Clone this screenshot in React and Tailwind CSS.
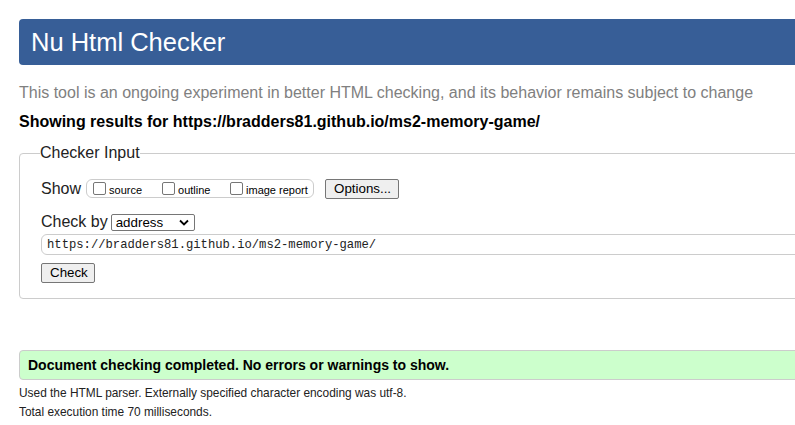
import React from 'react';

function Box({ label, className = '' }) {
  return (
    <label className={`flex items-center ${className}`}>
      <span className="shrink-0 w-[13px] h-[13px] border border-[#767676] rounded-[2px] bg-white" />
      <span className="ml-[3px] text-[11px] leading-[13px] mt-[3px] whitespace-nowrap">{label}</span>
    </label>
  );
}

function Btn({ children, className = '' }) {
  return (
    <button className={`h-[20px] px-[8px] bg-[#efefef] border border-[#767676] rounded-[2px] text-[13.33px] leading-[16px] text-black ${className}`}>
      {children}
    </button>
  );
}

export default function App() {
  return (
    <div className="w-full min-h-[425px] overflow-hidden bg-white text-black" style={{ fontFamily: '"Liberation Sans", Arial, sans-serif' }}>
      <div className="w-[1100px] pl-[19px] pt-[19px]">
        {/* Header */}
        <div className="h-[46px] flex items-center pl-[12px] rounded-l-[4px] bg-[#375e97]">
          <h1 className="text-[25.5px] leading-[28px] text-white">Nu Html Checker</h1>
        </div>

        <p className="mt-[19px] text-[16px] leading-[18px] text-[#808080]">
          This tool is an ongoing experiment in better HTML checking, and its behavior remains subject to change
        </p>
        <p className="mt-[11px] text-[16px] leading-[18px] font-bold text-black">
          Showing results for https://bradders81.github.io/ms2-memory-game/
        </p>

        {/* Checker Input */}
        <fieldset className="mt-[13px] border border-[#cccccc] rounded-l-[4px] pl-[21px] pb-[14px]">
          <legend className="-ml-px text-[16px] leading-[18px] text-[#222]">Checker Input</legend>

          <div className="mt-[17px] flex items-center h-[19px]">
            <span className="text-[16px] leading-[18px] text-[#222]">Show</span>
            <div className="ml-[5px] h-[19px] w-[228px] flex items-center border border-[#cccccc] rounded-[6px] pl-[6px]">
              <Box label="source" className="w-[69px]" />
              <Box label="outline" className="w-[68px]" />
              <Box label="image report" />
            </div>
            <Btn className="ml-[11px] w-[74px]">Options...</Btn>
          </div>

          <div className="mt-[16px] flex items-center h-[16px]">
            <span className="text-[16px] leading-[18px] text-[#222]">Check by</span>
            <div className="ml-[3px] h-[17px] w-[84px] flex items-center justify-between border border-[#767676] rounded-[2px] bg-white pl-[4px] pr-[5px]">
              <span className="text-[13.33px] leading-[15px] text-black">address</span>
              <svg width="10" height="7" viewBox="0 0 10 7" fill="none">
                <polyline points="1,1.5 5,5.5 9,1.5" stroke="#000" strokeWidth="1.8" />
              </svg>
            </div>
          </div>

          <div className="mt-[4px] h-[21px] flex items-center border border-[#cccccc] rounded-l-[6px] pl-[5px]">
            <span className="text-[12.2px] leading-[14px] text-[#222]" style={{ fontFamily: '"Liberation Mono", "DejaVu Sans Mono", monospace' }}>
              https://bradders81.github.io/ms2-memory-game/
            </span>
          </div>

          <Btn className="mt-[8px] w-[54px]">Check</Btn>
        </fieldset>

        {/* Result */}
        <div className="mt-[51px] h-[30px] flex items-center bg-[#ccffcc] border border-[#cccccc] rounded-l-[4px] pl-[8px]">
          <span className="text-[14px] leading-[18px] font-bold text-black">
            Document checking completed. No errors or warnings to show.
          </span>
        </div>

        <div className="mt-[4px] text-[11.9px] leading-[19px] text-[#222]">
          <p>Used the HTML parser. Externally specified character encoding was utf-8.</p>
          <p>Total execution time 70 milliseconds.</p>
        </div>
      </div>
    </div>
  );
}
